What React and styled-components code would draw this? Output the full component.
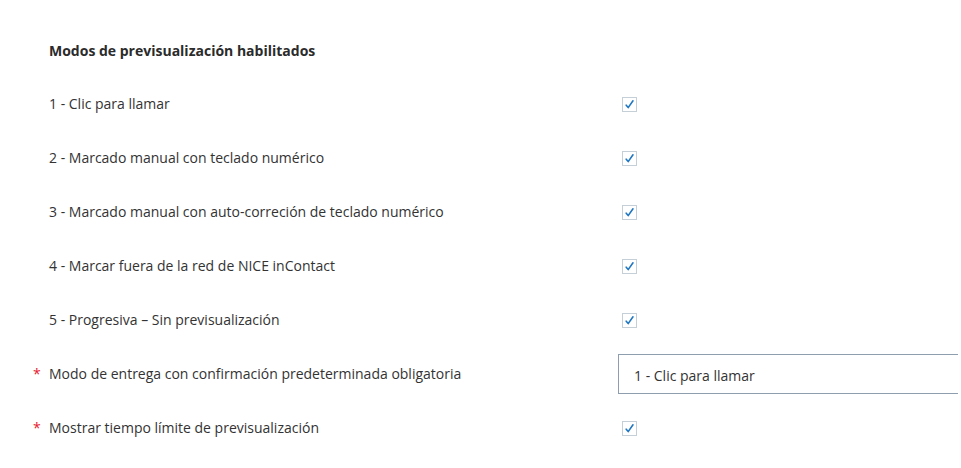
import React from 'react';
import { styled, createGlobalStyle } from 'styled-components';

const GlobalStyle = createGlobalStyle`
  html, body {
    margin: 0;
    padding: 0;
    background: #ffffff;
    overflow: hidden;
  }
  body {
    font-family: "Open Sans", "Noto Sans", "Liberation Sans", sans-serif;
    color: #333333;
  }
`;

const modes = [
  '1 - Clic para llamar',
  '2 - Marcado manual con teclado numérico',
  '3 - Marcado manual con auto-correción de teclado numérico',
  '4 - Marcar fuera de la red de NICE inContact',
  '5 - Progresiva – Sin previsualización',
];

function CheckBox() {
  return (
    <Box>
      <svg width="11" height="11" viewBox="0 0 11 11">
        <path
          d="M2.2 6.2 L4.2 8.6 L9 1.8"
          fill="none"
          stroke="#1f76c2"
          strokeWidth="1.6"
          strokeLinecap="round"
          strokeLinejoin="round"
        />
      </svg>
    </Box>
  );
}

export default function App() {
  return (
    <>
      <GlobalStyle />
      <Page>
        <Heading>Modos de previsualización habilitados</Heading>
        <List>
          {modes.map((m) => (
            <Row key={m}>
              <Label>{m}</Label>
              <Control>
                <CheckBox />
              </Control>
            </Row>
          ))}
          <Row>
            <Label required>
              <Star>*</Star>
              Modo de entrega con confirmación predeterminada obligatoria
            </Label>
            <Control>
              <Select>1 - Clic para llamar</Select>
            </Control>
          </Row>
          <Row>
            <Label required>
              <Star>*</Star>
              Mostrar tiempo límite de previsualización
            </Label>
            <Control>
              <CheckBox />
            </Control>
          </Row>
        </List>
      </Page>
    </>
  );
}

const Page = styled.div`
  padding: 41px 0 0 49px;
  width: 958px;
  box-sizing: border-box;
  overflow: hidden;
`;

const Heading = styled.div`
  font-size: 14px;
  font-weight: 700;
  line-height: 20px;
  color: #2b2b2b;
  margin-bottom: 16px;
`;

const List = styled.div`
  display: flex;
  flex-direction: column;
`;

const Row = styled.div`
  display: flex;
  align-items: center;
  height: 54px;
`;

const Label = styled.div`
  width: ${({ required }) => (required ? '585px' : '569px')};
  flex-shrink: 0;
  display: flex;
  align-items: center;
  font-size: 14px;
  line-height: 20px;
  color: #333333;
  margin-left: ${({ required }) => (required ? '-16px' : '0')};
`;

const Star = styled.span`
  width: 16px;
  flex-shrink: 0;
  color: #e5202e;
  font-size: 14px;
`;

const Control = styled.div`
  display: flex;
  align-items: center;
  flex-shrink: 0;
`;

const Box = styled.div`
  width: 15px;
  height: 15px;
  margin-left: 4px;
  box-sizing: border-box;
  border: 1px solid #c5cfd8;
  background: #ffffff;
  display: flex;
  align-items: center;
  justify-content: center;
`;

const Select = styled.div`
  width: 380px;
  height: 40px;
  box-sizing: border-box;
  border: 1px solid #8e9eae;
  display: flex;
  align-items: center;
  padding: 2px 0 0 15px;
  font-size: 14px;
  color: #333333;
`;
